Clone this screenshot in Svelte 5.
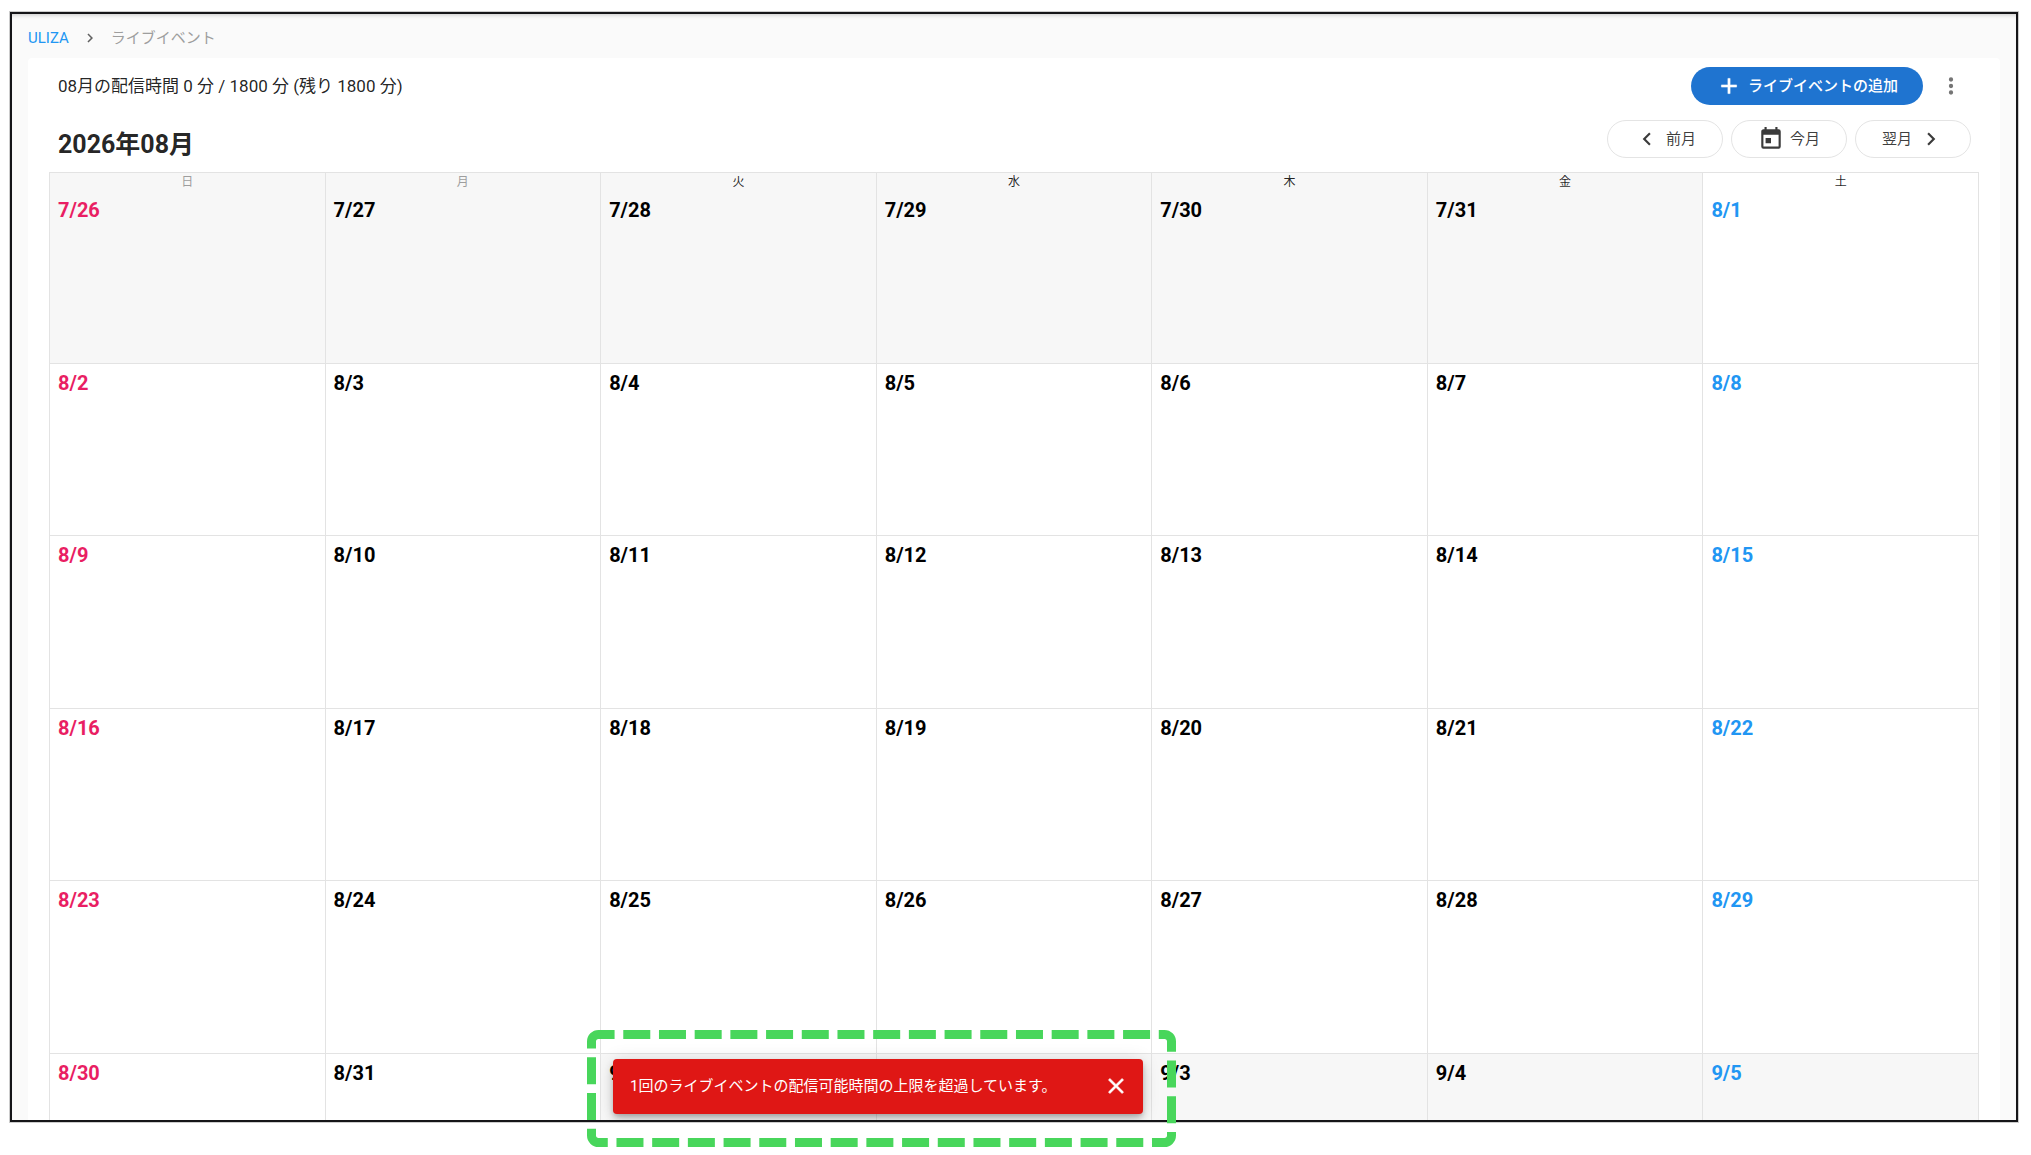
<script>
	const weekdays = ['日', '月', '火', '水', '木', '金', '土'];
	const year = 2026;
	const month = 8;

	// the grid starts on the Sunday on or before the 1st
	const first = new Date(year, month - 1, 1);
	const weeks = Array.from({ length: 6 }, (_, week) =>
		Array.from({ length: 7 }, (_, day) => {
			const date = new Date(year, month - 1, 1 - first.getDay() + week * 7 + day);
			return {
				label: `${date.getMonth() + 1}/${date.getDate()}`,
				outside: date.getMonth() !== month - 1
			};
		})
	);

	let showSnackbar = true;
</script>

<div class="page">
	<main class="frame">
		<nav class="breadcrumbs">
			<a href="#home">ULIZA</a>
			<svg viewBox="0 0 24 24" width="18" height="18"><path d="M8.59 16.58L13.17 12L8.59 7.41L10 6l6 6l-6 6z" /></svg>
			<span>ライブイベント</span>
		</nav>

		<section class="panel">
			<div class="toolbar">
				<p class="usage">08月の配信時間 0 分 / 1800 分 (残り 1800 分)</p>
				<button class="btn btn--primary" type="button">
					<svg viewBox="0 0 24 24" width="26" height="26"><path d="M19 13h-6v6h-2v-6H5v-2h6V5h2v6h6z" /></svg>
					ライブイベントの追加
				</button>
				<button class="menu" type="button" aria-label="メニュー">
					<svg viewBox="0 0 24 24" width="26" height="26"><path d="M12 16a2 2 0 1 1 0 4a2 2 0 0 1 0-4m0-6a2 2 0 1 1 0 4a2 2 0 0 1 0-4m0-6a2 2 0 1 1 0 4a2 2 0 0 1 0-4" /></svg>
				</button>
			</div>

			<div class="heading">
				<h1>2026年08月</h1>
				<div class="heading__nav">
					<button class="btn" type="button">
						<svg viewBox="0 0 24 24" width="26" height="26"><path d="M15.41 16.58L10.83 12l4.58-4.59L14 6l-6 6l6 6z" /></svg>
						前月
					</button>
					<button class="btn" type="button">
						<svg viewBox="0 0 24 24" width="26" height="26"><path d="M7 11h5v5H7m12 3H5V8h14m0-5h-1V1h-2v2H8V1H6v2H5c-1.11 0-2 .89-2 2v14a2 2 0 0 0 2 2h14a2 2 0 0 0 2-2V5a2 2 0 0 0-2-2" /></svg>
						今月
					</button>
					<button class="btn" type="button">
						翌月
						<svg viewBox="0 0 24 24" width="26" height="26"><path d="M8.59 16.58L13.17 12L8.59 7.41L10 6l6 6l-6 6z" /></svg>
					</button>
				</div>
			</div>

			<table class="calendar">
				<thead>
					<tr>
						{#each weekdays as weekday, i}
							<th class:outside={weeks[0][i].outside} class:past={i < 2}>{weekday}</th>
						{/each}
					</tr>
				</thead>
				<tbody>
					{#each weeks as week}
						<tr>
							{#each week as day, i}
								<td class:outside={day.outside} class:sunday={i === 0} class:saturday={i === 6}>
									{day.label}
								</td>
							{/each}
						</tr>
					{/each}
				</tbody>
			</table>
		</section>

		{#if showSnackbar}
			<div class="snackbar" role="alert">
				<span>1回のライブイベントの配信可能時間の上限を超過しています。</span>
				<button type="button" aria-label="閉じる" on:click={() => (showSnackbar = false)}>
					<svg viewBox="0 0 24 24" width="26" height="26"><path d="M19 6.41L17.59 5L12 10.59L6.41 5L5 6.41L10.59 12L5 17.59L6.41 19L12 13.41L17.59 19L19 17.59L13.41 12z" /></svg>
				</button>
			</div>
		{/if}
	</main>

	<svg class="callout" viewBox="0 0 589 117" width="589" height="117">
		<path d="M4.5 11.5a7 7 0 0 1 7-7h566a7 7 0 0 1 7 7v94a7 7 0 0 1-7 7h-566a7 7 0 0 1-7-7z" />
	</svg>
</div>

<style>
	:global(body) {
		margin: 0;
		background: #fff;
	}

	svg {
		fill: currentColor;
		flex: none;
	}

	button {
		font-family: inherit;
		line-height: inherit;
		cursor: pointer;
	}

	.page {
		position: relative;
		box-sizing: border-box;
		height: 100vh;
		padding: 12px 13px 33px 10px;
		overflow: hidden;
		font-family: Roboto, 'Noto Sans CJK JP', sans-serif;
		line-height: 20px;
		color: rgba(0, 0, 0, 0.87);
	}

	.frame {
		position: relative;
		box-sizing: border-box;
		height: 100%;
		padding: 0 16px;
		overflow: hidden;
		border: 2px solid #151518;
		background: #fafafa;
		box-shadow:
			0 0 0 1px rgba(0, 0, 0, 0.2),
			inset 0 4px 4px -3px rgba(0, 0, 0, 0.2);
	}

	.breadcrumbs {
		display: flex;
		align-items: center;
		gap: 12px;
		height: 40px;
		padding-top: 4px;
		font-size: 15px;
		color: #9e9e9e;
	}

	.breadcrumbs a {
		color: #2196f3;
		text-decoration: none;
	}

	.breadcrumbs svg {
		color: #616161;
	}

	.panel {
		padding: 9px 21px 0;
		border-radius: 4px;
		background: #fff;
	}

	.toolbar {
		display: flex;
		align-items: center;
		padding: 0 15px 0 9px;
	}

	.usage {
		flex: 1;
		margin: 0;
		font-size: 17px;
	}

	.btn {
		display: flex;
		align-items: center;
		justify-content: center;
		gap: 6px;
		box-sizing: border-box;
		width: 116px;
		height: 38px;
		padding: 0;
		border: 1px solid #e4e4e4;
		border-radius: 19px;
		background: #fff;
		font-size: 15px;
		color: rgba(0, 0, 0, 0.77);
	}

	.btn--primary {
		width: 232px;
		border: none;
		background: #1f74d0;
		font-weight: 500;
		color: #fff;
	}

	.btn--primary svg {
		stroke: currentColor;
		stroke-width: 0.5;
	}

	.menu {
		display: flex;
		margin-left: 15px;
		padding: 0;
		border: none;
		background: none;
		color: #757575;
	}

	.heading {
		display: flex;
		align-items: center;
		justify-content: space-between;
		padding: 15px 8px 14px 9px;
	}

	.heading h1 {
		margin: 0;
		padding-top: 12px;
		font-size: 25px;
		line-height: 26px;
		font-weight: 700;
	}

	.heading__nav {
		display: flex;
		gap: 8px;
	}

	.calendar {
		width: 100%;
		table-layout: fixed;
		border-collapse: separate;
		border-spacing: 0;
		border: solid #e3e3e3;
		border-width: 1px 0 0 1px;
	}

	.calendar th,
	.calendar td {
		box-sizing: border-box;
		border-right: 1px solid #e3e3e3;
	}

	.calendar th {
		height: 18px;
		padding: 0;
		font-size: 12px;
		line-height: 18px;
		font-weight: 400;
	}

	.calendar th.past {
		color: #9e9e9e;
	}

	.calendar td {
		height: 173px;
		padding: 7px 8px;
		border-bottom: 1px solid #e3e3e3;
		vertical-align: top;
		font-size: 20px;
		line-height: 24px;
		font-weight: 700;
		color: #000;
	}

	.calendar tr:nth-child(even) td {
		height: 172px;
	}

	.calendar .outside {
		background: #f7f7f7;
	}

	.calendar td.sunday {
		color: #e91e63;
	}

	.calendar td.saturday {
		color: #2196f3;
	}

	.snackbar {
		position: absolute;
		bottom: 6px;
		left: 601px;
		display: flex;
		align-items: center;
		justify-content: space-between;
		box-sizing: border-box;
		width: 530px;
		height: 55px;
		padding: 0 14px 2px 17px;
		border-radius: 4px;
		background: #df1715;
		box-shadow:
			0 3px 5px -1px rgba(0, 0, 0, 0.2),
			0 6px 10px rgba(0, 0, 0, 0.14),
			0 1px 18px rgba(0, 0, 0, 0.12);
		font-size: 15px;
		color: #fff;
	}

	.snackbar button {
		display: flex;
		padding: 0;
		border: none;
		background: none;
		color: inherit;
	}

	.snackbar svg {
		stroke: currentColor;
		stroke-width: 0.5;
	}

	/* dashed outline drawing attention to the snackbar */
	.callout {
		position: absolute;
		bottom: 8px;
		left: 587px;
		pointer-events: none;
	}

	.callout path {
		fill: none;
		stroke: #48d65b;
		stroke-width: 9;
		stroke-dasharray: 27 8.7;
	}
</style>
